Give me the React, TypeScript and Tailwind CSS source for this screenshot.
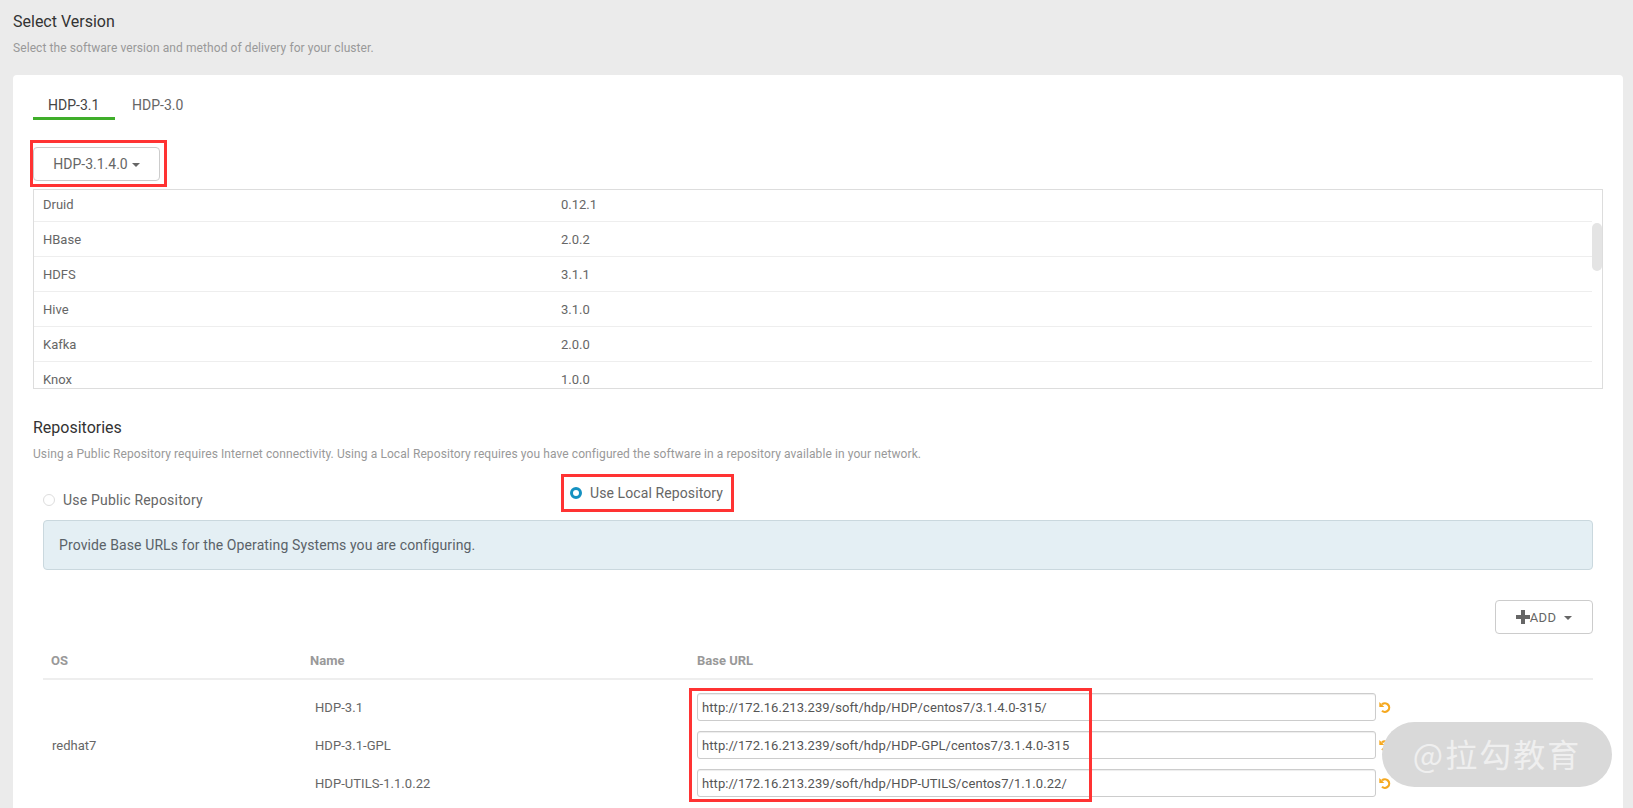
const STACKS = [
  ["Druid", "0.12.1"],
  ["HBase", "2.0.2"],
  ["HDFS", "3.1.1"],
  ["Hive", "3.1.0"],
  ["Kafka", "2.0.0"],
  ["Knox", "1.0.0"],
];

const REPOS = [
  ["HDP-3.1", "http://172.16.213.239/soft/hdp/HDP/centos7/3.1.4.0-315/"],
  ["HDP-3.1-GPL", "http://172.16.213.239/soft/hdp/HDP-GPL/centos7/3.1.4.0-315"],
  ["HDP-UTILS-1.1.0.22", "http://172.16.213.239/soft/hdp/HDP-UTILS/centos7/1.1.0.22/"],
];

function Caret() {
  return <span className="ml-1 inline-block h-0 w-0 border-x-[4px] border-t-[4px] border-x-transparent border-t-[#666] align-middle" />;
}

function PlusIcon() {
  return (
    <svg viewBox="0 0 14 14" className="h-[14px] w-[14px] fill-[#666]">
      <path d="M5 0h4v5h5v4H9v5H5V9H0V5h5z" />
    </svg>
  );
}

function UndoIcon() {
  return (
    <svg viewBox="0 0 12 13" className="ml-[3px] h-[13px] w-[12px] fill-none">
      <path d="M3 3.4A4.3 4.3 0 1 1 3 9.8" stroke="#f5a81f" strokeWidth="2.2" />
      <path d="M0.3 1v5h5z" fill="#f5a81f" />
    </svg>
  );
}

export default function App() {
  return (
    <div className="relative h-[808px] overflow-hidden bg-[#ebebeb] font-['Roboto',sans-serif] text-[#666]">
      {/* Header */}
      <div className="pl-[13px] pt-[11px]">
        <h1 className="text-base leading-[22px] font-normal text-[#333]">Select Version</h1>
        <p className="mt-[6px] text-xs leading-[18px] tracking-[0.08px] text-[#999]">Select the software version and method of delivery for your cluster.</p>
      </div>

      <div className="mt-[18px] ml-[13px] mr-[10px] h-[740px] rounded-t-[4px] bg-white px-5 pt-[11px]">
        {/* Tabs */}
        <div className="flex h-[34px] text-sm">
          <div className="w-[82px] border-b-[3px] border-[#3fae2a] pt-[9px] pl-[15px] text-[#444]">HDP-3.1</div>
          <div className="pt-[9px] pl-[17px]">HDP-3.0</div>
        </div>

        {/* Version dropdown */}
        <div className="mt-5 -ml-[3px] h-[47px] w-[137px] border-[3px] border-[#ff3333] pt-1">
          <button className="h-[34px] w-[127px] rounded-[4px] border border-[#ccc] bg-white text-sm text-[#666]">
            HDP-3.1.4.0
            <Caret />
          </button>
        </div>

        {/* Stack list */}
        <div className="relative mt-[2px] h-[200px] overflow-hidden border border-[#ddd] text-[13px]">
          <div className="-mt-[3px] pr-[10px]">
            {STACKS.map(([name, version]) => (
              <div key={name} className="grid h-[35px] grid-cols-[518px_1fr] items-center border-b border-[#eee] pt-px pl-[9px] last:border-b-0">
                <span>{name}</span>
                <span>{version}</span>
              </div>
            ))}
          </div>
          <div className="absolute right-0 top-[33px] h-[48px] w-[10px] rounded-[5px] bg-[#e4e4e4]" />
        </div>

        {/* Repositories */}
        <h2 className="mt-[28px] text-base leading-[22px] font-normal text-[#333]">Repositories</h2>
        <p className="mt-[6px] text-xs leading-[18px] tracking-[0.09px] text-[#999]">
          Using a Public Repository requires Internet connectivity. Using a Local Repository requires you have configured the software in a repository available in your network.
        </p>

        <div className="mt-[11px] flex h-[46px] text-sm">
          <label className="mt-[5px] ml-[10px] flex w-[518px] items-center tracking-[0.2px]">
            <span className="h-3 w-3 rounded-full border border-[#ddd] bg-white" />
            <span className="ml-2">Use Public Repository</span>
          </label>
          <label className="flex h-[38px] w-[173px] items-center border-[3px] border-[#ff3333] pb-px pl-[6px] tracking-[0.1px]">
            <span className="h-3 w-3 rounded-full border-[3px] border-[#1491c1] bg-white" />
            <span className="ml-2">Use Local Repository</span>
          </label>
        </div>

        <div className="mx-[10px]">
          <div className="flex h-[50px] items-center rounded-[4px] border border-[#cad8de] bg-[#e4eff4] pl-[15px] text-sm tracking-[0.11px] text-[#5a6268]">
            Provide Base URLs for the Operating Systems you are configuring.
          </div>

          <div className="mt-[30px] flex justify-end">
            <button className="flex h-[34px] w-[98px] items-center justify-center rounded-[4px] border border-[#ccc] bg-white text-[13px] tracking-[0.4px] text-[#666]">
              <PlusIcon />
              <span className="mt-px">ADD</span>
              <span className="mt-px ml-[8px] h-0 w-0 border-x-[4px] border-t-[4px] border-x-transparent border-t-[#666]" />
            </button>
          </div>

          {/* Repo table */}
          <div className="grid h-[46px] grid-cols-[260px_394px_1fr] items-end border-b-2 border-[#eee] pb-[8px] text-[13px] leading-[18px] font-bold text-[#999]">
            <span className="pl-[8px]">OS</span>
            <span className="pl-[7px]">Name</span>
            <span>Base URL</span>
          </div>

          <div className="mt-[13px] grid grid-cols-[260px_1fr]">
            <div className="flex items-center pt-px pl-[9px] text-[13px]">redhat7</div>
            <div className="flex flex-col gap-[10px]">
              {REPOS.map(([name, url]) => (
                <div key={name} className="grid h-[28px] grid-cols-[394px_679px_1fr] items-center text-[13px]">
                  <span className="pt-px pl-3 tracking-[0.05px]">{name}</span>
                  <input
                    readOnly
                    value={url}
                    className="h-[28px] w-full rounded-[3px] border border-[#ccc] pl-[4px] text-[13px] tracking-[0.08px] text-[#555] shadow-[inset_0_1px_1px_rgba(0,0,0,0.075)] outline-none"
                  />
                  <UndoIcon />
                </div>
              ))}
            </div>
          </div>
        </div>
      </div>

      {/* Red outline over the URL inputs */}
      <div className="pointer-events-none absolute left-[689px] top-[688px] h-[114px] w-[403px] border-[3px] border-[#ff3333]" />

      {/* Watermark */}
      <div className="absolute left-[1382px] top-[722px] flex h-[65px] w-[230px] items-center justify-center rounded-full bg-[#d9d9d9] pb-[3px] font-['Noto_Sans_CJK_SC',sans-serif] text-[32px] tracking-[2px] text-[#efefef]">
        @拉勾教育
      </div>
    </div>
  );
}
